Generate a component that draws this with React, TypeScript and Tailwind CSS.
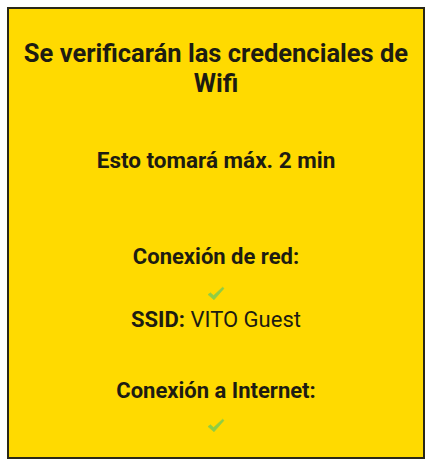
import React from "react";

function Check() {
  return (
    <svg width="18" height="15" viewBox="0 0 18 15" className="block">
      <path d="M1 8.6 L3.4 6.8 L6.6 9.6 L15.6 1.2 L17 2.4 L7 13.8 Z" fill="#8fcd45" stroke="#8fcd45" strokeWidth="0.6" strokeLinejoin="round" />
    </svg>
  );
}

export default function App() {
  return (
    <div className="w-[429px] h-[460px] bg-white p-[7px] box-border" style={{ fontFamily: "Roboto, 'Liberation Sans', sans-serif" }}>
      <div className="w-[418px] h-[452px] border-2 border-[#2a2817] bg-[#ffda00] flex flex-col items-center text-center text-[#1d1c12]">
        <div className="mt-[29px] text-[25.5px] leading-[30px] font-bold px-3">
          Se verificarán las credenciales de Wifi
        </div>
        <div className="mt-[48px] text-[22.5px] leading-[28px] font-bold">
          Esto tomará máx. 2 min
        </div>
        <div className="mt-[69px] text-[22px] leading-[28px] font-bold">
          Conexión de red:
        </div>
        <div className="mt-[15px]">
          <Check />
        </div>
        <div className="mt-[5px] text-[22px] leading-[28px]">
          <span className="font-bold">SSID:</span> VITO Guest
        </div>
        <div className="mt-[43px] text-[22px] leading-[28px] font-bold">
          Conexión a Internet:
        </div>
        <div className="mt-[13px]">
          <Check />
        </div>
      </div>
    </div>
  );
}
